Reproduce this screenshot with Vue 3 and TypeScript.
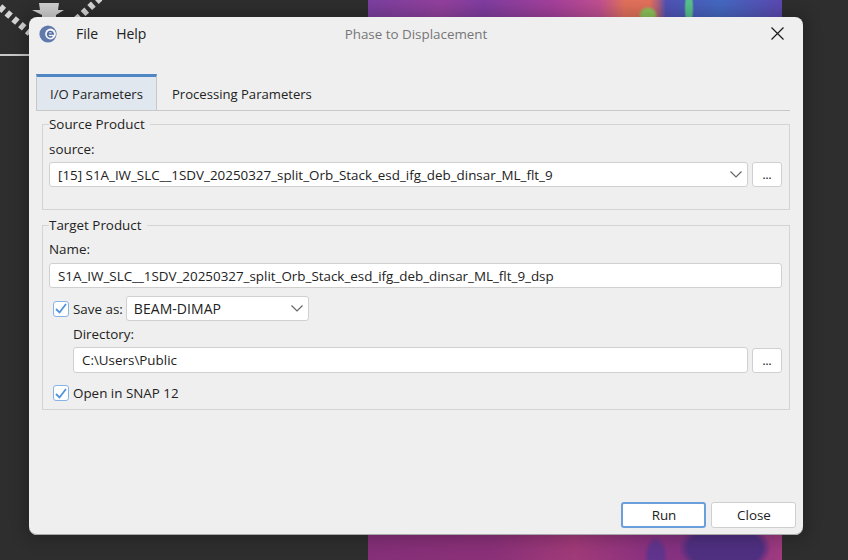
<script setup lang="ts">
const sourceName = '[15] S1A_IW_SLC__1SDV_20250327_split_Orb_Stack_esd_ifg_deb_dinsar_ML_flt_9'
const targetName = 'S1A_IW_SLC__1SDV_20250327_split_Orb_Stack_esd_ifg_deb_dinsar_ML_flt_9_dsp'
</script>

<template>
  <div class="desk">
    <div class="map map-top"></div>
    <div class="map map-bottom"></div>
    <svg class="gear" width="110" height="60" viewBox="0 0 110 60">
      <path d="M0 7 L30 33 M100 -2 L76 20" stroke="#d4d4d4" stroke-width="7" stroke-dasharray="5 4" fill="none" />
      <path d="M39 3 H59 L58 10 H64 L56 15 V18 H42 V15 L32 10 H40 Z" fill="#cfcfcf" />
      <path d="M0 55 H30" stroke="#c8c8c8" stroke-width="2" />
    </svg>
    <div class="dialog">
      <div class="titlebar">
        <svg class="logo" width="18" height="18" viewBox="0 0 18 18">
          <circle cx="9" cy="9" r="8.6" fill="#6079aa" />
          <circle cx="11.5" cy="9" r="5.4" fill="#f2f4f8" />
          <path d="M9 9 h5.2 a2.8 2.8 0 1 0 -0.9 2.3" stroke="#4f689e" stroke-width="1.5" fill="none" />
        </svg>
        <span class="menu">File</span>
        <span class="menu">Help</span>
        <span class="title">Phase to Displacement</span>
        <svg class="close" width="13" height="13" viewBox="0 0 13 13">
          <path d="M0.5 0.5 L12.5 12.5 M12.5 0.5 L0.5 12.5" stroke="#1a1a1a" stroke-width="1.2" />
        </svg>
      </div>
      <div class="tabs">
        <div class="tab active">I/O Parameters</div>
        <div class="tab second">Processing Parameters</div>
      </div>
      <fieldset class="group source">
        <legend>Source Product</legend>
        <div class="label first">source:</div>
        <div class="row gap4">
          <div class="field combo grow">
            <span class="long">{{ sourceName }}</span>
            <svg class="chev" width="12" height="7" viewBox="0 0 12 7"><path d="M0.5 0.5 L6 6 L11.5 0.5" stroke="#666" stroke-width="1.2" fill="none" /></svg>
          </div>
          <div class="dots">...</div>
        </div>
      </fieldset>
      <fieldset class="group target">
        <legend>Target Product</legend>
        <div class="label name">Name:</div>
        <div class="field text long">{{ targetName }}</div>
        <div class="row save">
          <span class="check"><svg width="12" height="11" viewBox="0 0 12 11"><path d="M1 6 L4.5 9.5 L11 1" stroke="#4f93de" stroke-width="1.8" fill="none" /></svg></span>
          <span class="check-label">Save as:</span>
          <div class="field combo format">
            <span class="fmt">BEAM-DIMAP</span>
            <svg class="chev" width="12" height="7" viewBox="0 0 12 7"><path d="M0.5 0.5 L6 6 L11.5 0.5" stroke="#666" stroke-width="1.2" fill="none" /></svg>
          </div>
        </div>
        <div class="indent">
          <div class="label dir">Directory:</div>
          <div class="row gap4">
            <div class="field text grow tall">C:\Users\Public</div>
            <div class="dots tall">...</div>
          </div>
        </div>
        <div class="row open">
          <span class="check"><svg width="12" height="11" viewBox="0 0 12 11"><path d="M1 6 L4.5 9.5 L11 1" stroke="#4f93de" stroke-width="1.8" fill="none" /></svg></span>
          <span class="check-label">Open in SNAP 12</span>
        </div>
      </fieldset>
      <div class="spacer"></div>
      <div class="actions">
        <div class="btn primary">Run</div>
        <div class="btn">Close</div>
      </div>
    </div>
  </div>
</template>

<style>
html, body { margin: 0; background: #2d2d2d; }
</style>

<style scoped>
.desk {
  position: relative;
  width: 848px;
  height: 560px;
  overflow: hidden;
  background: #2e2e2e;
  font-family: "Open Sans", "Noto Sans", sans-serif;
  font-size: 13.4px;
  color: #222;
}
.map { position: absolute; left: 368px; width: 414px; }
.map-top {
  top: 0;
  height: 20px;
  background:
    radial-gradient(ellipse 10px 9px at 280px 15px, #8dc35a 0 60%, transparent 100%),
    radial-gradient(ellipse 5px 20px at 321px 8px, #58c08c 0 60%, transparent 100%),
    linear-gradient(90deg, #7a3f9f 0%, #92409c 18%, #7f3d9f 28%, #a4409a 45%, #c04f90 56%, #e0705c 62%, #e2705a 68%, #b0607a 70%, #4f52b4 72%, #4468c0 85%, #5b48b0 100%);
}
.map-bottom {
  top: 530px;
  height: 30px;
  background:
    radial-gradient(ellipse 46px 26px at 357px 18px, #4f2f80 0 80%, transparent 100%),
    radial-gradient(ellipse 12px 20px at 288px 26px, #60348c 0 60%, transparent 100%),
    linear-gradient(90deg, #842f78 0%, #8a3078 30%, #a03a78 50%, #8a3180 68%, #7a3280 85%, #a03a80 100%);
}
.gear { position: absolute; left: 0; top: 0; }
.dialog {
  position: absolute;
  left: 29px;
  top: 17px;
  width: 774px;
  height: 518px;
  box-sizing: border-box;
  background: #efefef;
  border-radius: 8px;
  box-shadow: inset 0 -1px 0 #a8a8a8, 0 0 14px 6px rgba(0, 0, 0, 0.18);
  display: flex;
  flex-direction: column;
  padding: 0 13px 0 7px;
}
.titlebar {
  height: 33px;
  display: flex;
  align-items: center;
  position: relative;
  margin-left: -7px;
  margin-right: -13px;
  padding: 0 19px 0 10px;
}
.logo { margin-right: 19px; }
.menu { margin-right: 18px; font-size: 14px; }
.title {
  position: absolute;
  left: 0;
  right: 0;
  text-align: center;
  color: #767676;
  font-size: 13.4px;
  pointer-events: none;
}
.close { margin-left: auto; }
.tabs {
  margin-top: 24px;
  height: 37px;
  display: flex;
  box-sizing: border-box;
  border-bottom: 1px solid #c8c8c8;
  font-size: 13.1px;
}
.tab {
  padding: 0 13px;
  display: flex;
  align-items: center;
  height: 36px;
  box-sizing: border-box;
  border-top: 3px solid transparent;
}
.tab.second { padding-left: 15px; }
.tab.active {
  background: #e1e7ee;
  border-top-color: #4f86c4;
  border-left: 1px solid #c8c8c8;
  border-right: 1px solid #c8c8c8;
}
.group {
  margin: 0 0 0 6px;
  padding: 0 7px 0 6px;
  border: 1px solid #d4d4d4;
  min-width: 0;
  box-sizing: border-box;
}
.group legend { padding: 0 5px 0 0; line-height: 20px; }
.source { margin-top: 3px; height: 96px; }
.target { margin-top: 5px; height: 195px; }
.label { line-height: 18px; }
.label.first { margin-top: 6px; }
.label.name { margin-top: 5px; margin-bottom: 5px; }
.row { display: flex; align-items: center; }
.gap4 { margin-top: 4px; }
.grow { flex: 1; min-width: 0; }
.field {
  height: 25px;
  box-sizing: border-box;
  background: #fff;
  border: 1px solid #d0d0d0;
  border-radius: 3px;
  display: flex;
  align-items: center;
  padding: 0 8px;
  white-space: nowrap;
}
.tall { height: 26px; }
.combo { justify-content: space-between; padding-right: 5px; }
.chev { flex: none; }
.dots {
  width: 30px;
  height: 25px;
  margin-left: 4px;
  box-sizing: border-box;
  background: #fff;
  border: 1px solid #d0d0d0;
  border-radius: 3px;
  text-align: center;
  line-height: 24px;
  font-size: 11px;
  font-weight: 600;
  color: #222;
}
.save { margin-top: 8px; }
.check {
  width: 16px;
  height: 16px;
  box-sizing: border-box;
  background: #fff;
  border: 1px solid #86b4e8;
  border-radius: 3px;
  display: flex;
  align-items: center;
  justify-content: center;
  margin-left: 4px;
}
.check-label { margin-left: 4px; }
.format { width: 183px; margin-left: 3px; padding-left: 7px; }
.fmt { font-size: 14px; letter-spacing: 0.05px; }
.indent { margin-left: 24px; }
.dir { margin-top: 4px; }
.open { margin-top: 11px; }
.spacer { flex: 1; }
.actions {
  display: flex;
  justify-content: flex-end;
  gap: 5px;
  padding-bottom: 7px;
  margin-right: -6px;
}
.btn {
  width: 85px;
  height: 26px;
  box-sizing: border-box;
  background: #fff;
  border: 1px solid #cfcfcf;
  border-radius: 3px;
  display: flex;
  align-items: center;
  justify-content: center;
  padding-left: 1px;
}
.btn.primary { border: 2px solid #6a9fdc; }
</style>
